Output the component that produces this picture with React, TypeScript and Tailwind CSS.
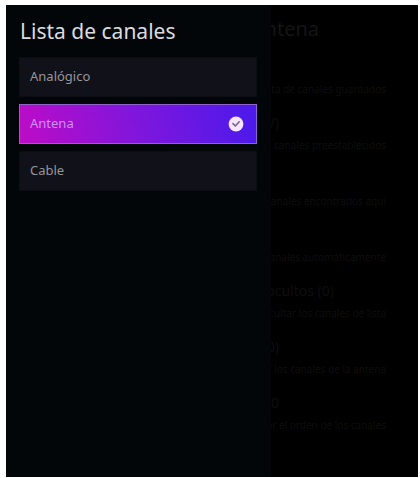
import { useState } from "react";

type SettingType = { title: string; description: string };

const channelLists = ["Analógico", "Antena", "Cable"];

const settings: SettingType[] = [
  { title: "", description: "Seleccionar la lista de canales guardados" },
  { title: "Lista (TV)", description: "Lista de canales preestablecidos" },
  { title: "", description: "Lista de los canales encontrados aquí" },
  { title: "", description: "Buscar los canales automáticamente" },
  { title: "Canales ocultos (0)", description: "Mostrar y ocultar los canales de lista" },
  { title: "Lista (0)", description: "Gestionar los canales de la antena" },
  { title: "Editar 0", description: "Cambiar el orden de los canales" },
];

const CheckBadge = () => {
  return (
    <svg viewBox="0 0 16 16" className="size-4 shrink-0" aria-hidden="true">
      <circle cx="8" cy="8" r="7.4" fill="#f6e6fd" />
      <path
        d="M5 7.6 L7.4 10 L11.2 5.8"
        fill="none"
        stroke="#75658c"
        strokeWidth="1.6"
        strokeLinecap="round"
        strokeLinejoin="round"
      />
    </svg>
  );
};

const ChannelItem = ({
  name,
  selected,
  onSelect,
}: {
  name: string;
  selected: boolean;
  onSelect: () => void;
}) => {
  return (
    <button
      type="button"
      aria-pressed={selected}
      onClick={onSelect}
      className={
        "flex h-10 w-full items-center justify-between border pl-2.5 pr-3 text-left text-[13px] " +
        (selected
          ? "border-[#8f62cc] bg-linear-[75deg] from-[#bd0cc6] via-[#7f16dc] via-50% to-[#4a1aec] text-[#d08fec]"
          : "border-[#0d0e15] bg-[#101119] text-[#96969b]")
      }
    >
      {name}
      {selected && <CheckBadge />}
    </button>
  );
};

const DimmedSettings = () => {
  return (
    <main className="pl-[190px] pr-8 pt-2.5 text-right">
      <h2 className="mr-[67px] text-xl leading-7 text-[#151515]">Antena</h2>
      <ul className="mt-3.5">
        {settings.map((setting) => (
          <li key={setting.description} className="h-14 whitespace-nowrap">
            <p
              className={
                "h-5 text-sm leading-5 text-[#0e0e0e] " +
                (setting.title.length > 12 ? "mr-[52px]" : "mr-[107px]")
              }
            >
              {setting.title}
            </p>
            <p className="flex justify-end overflow-hidden text-[10px] leading-6 text-[#0e0e0e]">
              {setting.description}
            </p>
          </li>
        ))}
      </ul>
    </main>
  );
};

export default function App() {
  const [selected, setSelected] = useState("Antena");

  return (
    <div className="min-h-screen bg-white pb-px pl-1.5 pr-0.5 pt-[5px] font-['Noto_Sans',sans-serif]">
      <div className="relative min-h-[calc(100vh-6px)] overflow-hidden bg-black">
        <DimmedSettings />
        <aside className="absolute inset-y-0 left-0 w-[265px] bg-[#020609] px-3.5 pt-2.5">
          <h1 className="text-[21px] leading-8 text-[#dcdcde]">
            Lista de canales
          </h1>
          <div className="-ml-px mt-2.5 flex flex-col gap-[7px]">
            {channelLists.map((name) => (
              <ChannelItem
                key={name}
                name={name}
                selected={name === selected}
                onSelect={() => setSelected(name)}
              />
            ))}
          </div>
        </aside>
      </div>
    </div>
  );
}
